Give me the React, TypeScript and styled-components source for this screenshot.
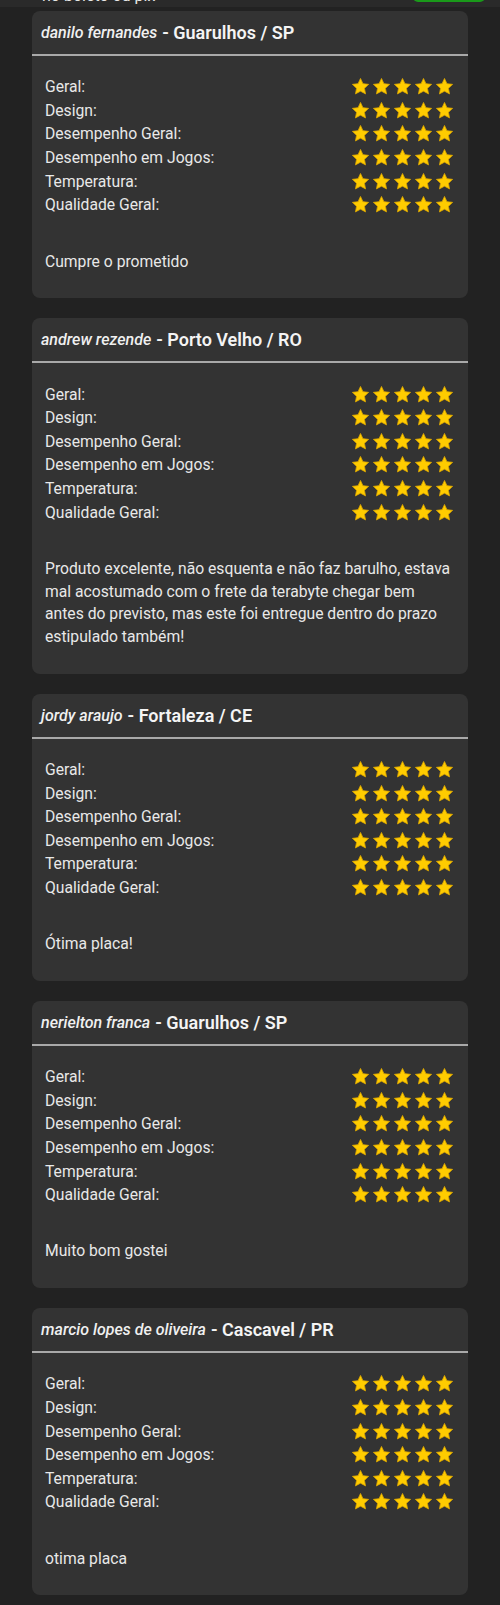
import styled, { createGlobalStyle } from 'styled-components';

interface Review {
  name: string;
  city: string;
  comment: string;
}

const CRITERIA = [
  'Geral:',
  'Design:',
  'Desempenho Geral:',
  'Desempenho em Jogos:',
  'Temperatura:',
  'Qualidade Geral:',
];

const REVIEWS: Review[] = [
  { name: 'danilo fernandes', city: 'Guarulhos / SP', comment: 'Cumpre o prometido' },
  {
    name: 'andrew rezende',
    city: 'Porto Velho / RO',
    comment:
      'Produto excelente, não esquenta e não faz barulho, estava mal acostumado com o frete da terabyte chegar bem antes do previsto, mas este foi entregue dentro do prazo estipulado também!',
  },
  { name: 'jordy araujo', city: 'Fortaleza / CE', comment: 'Ótima placa!' },
  { name: 'nerielton franca', city: 'Guarulhos / SP', comment: 'Muito bom gostei' },
  { name: 'marcio lopes de oliveira', city: 'Cascavel / PR', comment: 'otima placa' },
];

const GlobalStyle = createGlobalStyle`
  html, body {
    margin: 0;
    padding: 0;
    background: #222222;
  }
  body {
    font-family: Roboto, "Liberation Sans", Arial, sans-serif;
    color: #ebebeb;
  }
`;

const Page = styled.div`
  width: 500px;
  min-height: 1605px;
  background: #222222;
  overflow: hidden;
`;

// tail of the section above (payment info), cut off by the screenshot
const TopStrip = styled.div`
  height: 7px;
  background: #2a2a2a;
  overflow: hidden;
  display: flex;
  justify-content: space-between;
  align-items: flex-end;
  padding: 0 15px 0 42px;
`;

const StripText = styled.span`
  font-size: 16px;
  line-height: 18px;
  color: #e6e6e6;
  margin-bottom: 2px;
`;

const StripButton = styled.span`
  width: 72px;
  height: 20px;
  border-radius: 5px;
  background: #1a9a1a;
  margin-bottom: 5px;
`;

const List = styled.div`
  display: flex;
  flex-direction: column;
  gap: 20px;
  padding: 4px 32px 10px;
`;

const Card = styled.div`
  background: #333333;
  border-radius: 8px;
  overflow: hidden;
`;

const CardHeader = styled.div`
  height: 43px;
  display: flex;
  align-items: center;
  padding: 0 9px;
  border-bottom: 2px solid #a9a9a9;
  white-space: nowrap;
`;

const Name = styled.span`
  font-size: 16px;
  font-style: italic;
  font-weight: 500;
  color: #f0f0f0;
`;

const City = styled.span`
  font-size: 18px;
  font-weight: 600;
  color: #f4f4f4;
  margin-left: 5px;
`;

const CardBody = styled.div`
  padding: 19px 14px 25px 13px;
`;

const Row = styled.div`
  height: 23.6px;
  display: flex;
  align-items: center;
  justify-content: space-between;
`;

const Label = styled.span`
  font-size: 15.7px;
  color: #e8e8e8;
`;

const Stars = styled.div`
  display: flex;
  gap: 2px;
`;

const Comment = styled.p`
  margin: 34px 0 0;
  font-size: 15.7px;
  line-height: 22.7px;
  color: #e8e8e8;
`;

const Star = () => (
  <svg width="19" height="19" viewBox="0 0 24 24">
    <path
      d="M12 1.8l3.1 6.6 7.2.9-5.3 5 1.4 7.1L12 17.9l-6.4 3.5 1.4-7.1-5.3-5 7.2-.9z"
      fill="#ffcc00"
      stroke="#d9a400"
      strokeWidth="1"
      strokeLinejoin="round"
    />
  </svg>
);

const ReviewCard = ({ review }: { review: Review }) => (
  <Card>
    <CardHeader>
      <Name>{review.name}</Name>
      <City>- {review.city}</City>
    </CardHeader>
    <CardBody>
      {CRITERIA.map((c) => (
        <Row key={c}>
          <Label>{c}</Label>
          <Stars>
            {[0, 1, 2, 3, 4].map((i) => (
              <Star key={i} />
            ))}
          </Stars>
        </Row>
      ))}
      <Comment>{review.comment}</Comment>
    </CardBody>
  </Card>
);

export default function App() {
  return (
    <Page>
      <GlobalStyle />
      <TopStrip>
        <StripText>no boleto ou pix</StripText>
        <StripButton />
      </TopStrip>
      <List>
        {REVIEWS.map((r) => (
          <ReviewCard key={r.name} review={r} />
        ))}
      </List>
    </Page>
  );
}
